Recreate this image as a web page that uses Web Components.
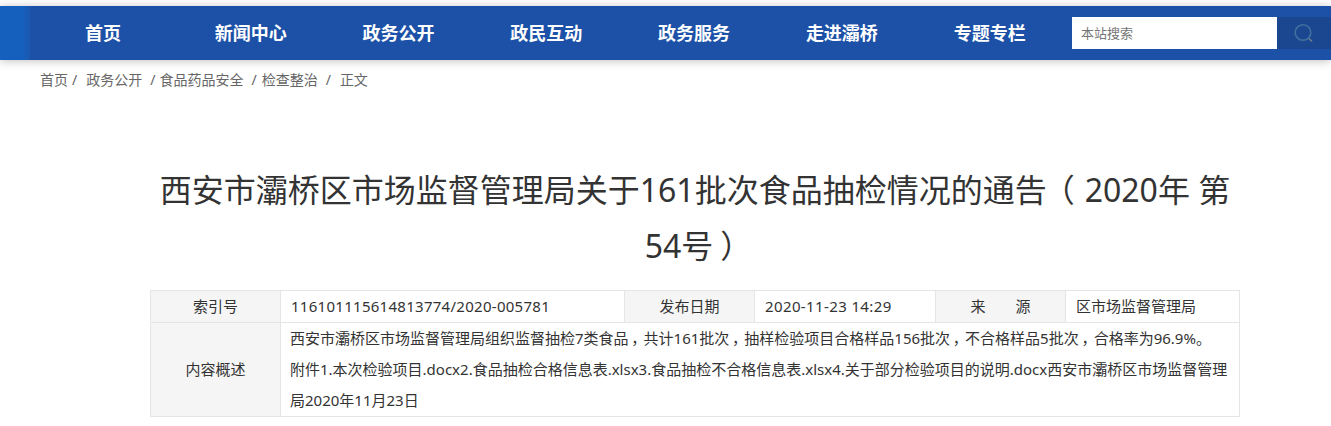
<!DOCTYPE html>
<html lang="zh-CN">
<head>
<meta charset="utf-8">
<title>通告</title>
<style>
  html, body { margin: 0; padding: 0; background: #fff; }
  body { font-family: "Noto Sans", "Noto Sans CJK SC", sans-serif; overflow: hidden; }
</style>
</head>
<body>
<site-header>
  <nav-link>首页</nav-link>
  <nav-link>新闻中心</nav-link>
  <nav-link>政务公开</nav-link>
  <nav-link>政民互动</nav-link>
  <nav-link>政务服务</nav-link>
  <nav-link>走进灞桥</nav-link>
  <nav-link>专题专栏</nav-link>
</site-header>
<bread-crumbs></bread-crumbs>
<article-head>西安市灞桥区市场监督管理局关于161批次食品抽检情况的通告<mid-punct open>（</mid-punct>2020年 第<br>54号<mid-punct>）</mid-punct></article-head>
<info-table></info-table>

<script>
class SiteHeader extends HTMLElement {
  constructor() {
    super();
    this.attachShadow({ mode: "open" }).innerHTML = `
      <style>
        :host {
          display: block;
          margin-top: 6px;
          height: 54px;
          background: linear-gradient(90deg, #1560bd 0, #1560bd 22px, #1a58b0 30px, #1c51a7 30px, #1c51a7 100%);
          box-shadow: 0 1px 9px rgba(0, 0, 0, 0.25);
          position: relative;
        }
        .bar { display: flex; align-items: center; height: 100%; }
        nav { display: flex; padding-left: 29px; width: 1072px; box-sizing: border-box; }
        form { display: flex; height: 32px; margin: 0; }
        input {
          width: 205px;
          height: 32px;
          box-sizing: border-box;
          border: 0;
          outline: 0;
          padding: 0 9px;
          font: 13px "Noto Sans", "Noto Sans CJK SC", sans-serif;
          background: #fff;
        }
        input::placeholder { color: #757575; opacity: 1; }
        button {
          width: 54px;
          height: 32px;
          padding: 0;
          border: 0;
          background: #1a4790;
          display: flex;
          align-items: center;
          justify-content: center;
        }
      </style>
      <div class="bar">
        <nav><slot></slot></nav>
        <form>
          <input type="text" placeholder="本站搜索">
          <button type="button" aria-label="搜索">
            <svg width="20" height="20" viewBox="0 0 20 20" fill="none">
              <circle cx="9" cy="9.5" r="7.8" stroke="#41729f" stroke-width="1.6"/>
              <path d="M15 15.5 L18 18.5" stroke="#6d7f8f" stroke-width="1.6"/>
            </svg>
          </button>
        </form>
      </div>`;
  }
}

class NavLink extends HTMLElement {
  constructor() {
    super();
    this.attachShadow({ mode: "open" }).innerHTML = `
      <style>
        :host {
          display: block;
          width: 147.8px;
          text-align: center;
          color: #fff;
          font-size: 18px;
          font-weight: 700;
          line-height: 54px;
          white-space: nowrap;
        }
      </style>
      <slot></slot>`;
  }
}

class BreadCrumbs extends HTMLElement {
  constructor() {
    super();
    this.attachShadow({ mode: "open" }).innerHTML = `
      <style>
        :host {
          display: flex;
          height: 38px;
          padding-left: 40px;
          align-items: center;
          color: #666;
          font-size: 14px;
          white-space: nowrap;
        }
        i { font-style: normal; margin: 0 9px 0 8px; }
        i.first { margin-left: 4px; }
        i.tight { margin-right: 4px; }
        i.tight2 { margin-right: 5px; }
      </style>
      <span>首页</span><i class="first">/</i><span>政务公开</span><i class="tight">/</i><span>食品药品安全</span><i class="tight2">/</i><span>检查整治</span><i>/</i><span>正文</span>`;
  }
}

// full width punctuation with its ink centred in the cell (palt trims the side bearings)
class MidPunct extends HTMLElement {
  constructor() {
    super();
    this.attachShadow({ mode: "open" }).innerHTML = `
      <style>
        :host {
          display: inline-block;
          width: 1em;
          line-height: 0;
          text-align: center;
          font-feature-settings: "palt";
        }
        :host([open]) { width: calc(1em + 6px); }
      </style>
      <slot></slot>`;
  }
}

class ArticleHead extends HTMLElement {
  constructor() {
    super();
    this.attachShadow({ mode: "open" }).innerHTML = `
      <style>
        :host {
          display: block;
          width: 1090px;
          margin: 64px 0 0 150px;
          text-align: center;
          color: #333;
          font-size: 32px;
          line-height: 56px;
        }
      </style>
      <slot></slot>`;
  }
}

class InfoTable extends HTMLElement {
  constructor() {
    super();
    this.attachShadow({ mode: "open" }).innerHTML = `
      <style>
        :host {
          display: block;
          width: 1090px;
          margin: 16px 0 0 150px;
          color: #333;
          font-size: 15px;
        }
        table { border-collapse: collapse; table-layout: fixed; width: 1089px; }
        th, td { border: 1px solid #e5e5e5; padding: 0 9px; line-height: 31px; height: 31px; }
        th { background: #f5f5f5; font-weight: 400; text-align: center; }
        td { text-align: left; white-space: normal; }
        .val { padding-left: 10px; }
        .num { letter-spacing: 0.28px; }
        .date { letter-spacing: 0.38px; }
      </style>
      <table>
        <colgroup>
          <col style="width:130px"><col style="width:344px"><col style="width:130px">
          <col style="width:181px"><col style="width:130px"><col style="width:174px">
        </colgroup>
        <tr>
          <th>索引号</th>
          <td class="val num">116101115614813774/2020-005781</td>
          <th>发布日期</th>
          <td class="val date">2020-11-23 14:29</td>
          <th>来&emsp;&emsp;源</th>
          <td class="val">区市场监督管理局</td>
        </tr>
        <tr>
          <th>内容概述</th>
          <td colspan="5">西安市灞桥区市场监督管理局组织监督抽检7类食品<mid-punct>，</mid-punct>共计161批次<mid-punct>，</mid-punct>抽样检验项目合格样品156批次<mid-punct>，</mid-punct>不合格样品5批次<mid-punct>，</mid-punct>合格率为96.9%。<br>附件1.本次检验项目.docx2.食品抽检合格信息表.xlsx3.食品抽检不合格信息表.xlsx4.关于部分检验项目的说明.docx西安市灞桥区市场监督管理<br>局2020年11月23日</td>
        </tr>
      </table>`;
  }
}

customElements.define("site-header", SiteHeader);
customElements.define("nav-link", NavLink);
customElements.define("bread-crumbs", BreadCrumbs);
customElements.define("mid-punct", MidPunct);
customElements.define("article-head", ArticleHead);
customElements.define("info-table", InfoTable);
</script>
</body>
</html>
